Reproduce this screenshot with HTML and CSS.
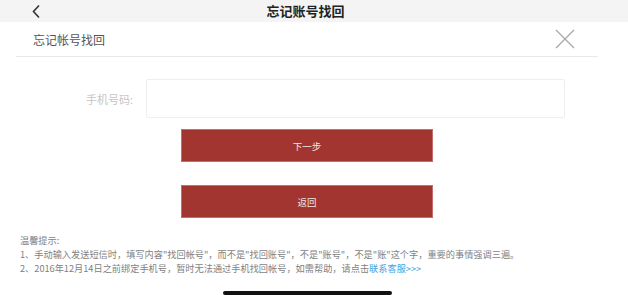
FILE: index.html
```html
<!DOCTYPE html>
<html>
<head>
    <title>忘记账号找回</title>
    <link rel="stylesheet" href="styles.css">
</head>
<body>
    <!-- Top navigation bar -->
    <div class="top-bar">
        <a class="back" href="#">
            <svg width="10" height="15" viewBox="0 0 10 15">
                <path d="M8 1.5 L2.5 7.5 L8 13.5" fill="none" stroke="#333" stroke-width="1.6"/>
            </svg>
        </a>
        <h1>忘记账号找回</h1>
        <span></span>
    </div>

    <!-- Panel header -->
    <div class="panel-head">
        <span class="panel-title">忘记帐号找回</span>
        <svg class="close" width="20" height="20" viewBox="0 0 20 20">
            <path d="M1 1 L19 19 M19 1 L1 19" stroke="#a8a8a8" stroke-width="1.3"/>
        </svg>
    </div>

    <!-- Main form -->
    <form class="find-form">
        <div class="form-row">
            <label for="phone">手机号码:</label>
            <input type="text" id="phone" name="phone">
        </div>
        <button type="button" class="btn btn-next">下一步</button>
        <button type="button" class="btn btn-back">返回</button>
    </form>

    <!-- Tips -->
    <div class="tips">
        <p>温馨提示:</p>
        <p>1、手动输入发送短信时，填写内容"找回帐号"，而不是"找回账号"，不是"账号"，不是"账"这个字，重要的事情强调三遍。</p>
        <p>2、2016年12月14日之前绑定手机号，暂时无法通过手机找回帐号，如需帮助，请点击<a href="#">联系客服&gt;&gt;&gt;</a></p>
    </div>

    <div class="home-bar"></div>
</body>
</html>
```

FILE: styles.css
```css
body {
    margin: 0;
    padding: 0;
    background: #fff;
    font-family: "Noto Sans CJK SC", "Noto Sans", sans-serif;
    color: #333;
}

/* Top bar */
.top-bar {
    height: 22px;
    background: #f4f4f4;
    display: grid;
    grid-template-columns: 1fr auto 1fr;
    align-items: center;
}

.back {
    display: flex;
    padding-left: 31px;
}

h1 {
    margin: 0 17px 0 0;
    font-size: 13px;
    line-height: 22px;
    font-weight: bold;
    color: #222;
}

/* Panel header */
.panel-head {
    height: 34px;
    margin: 0 30px 0 16px;
    border-bottom: 1px solid #e8e8e8;
    display: flex;
    justify-content: space-between;
    align-items: center;
}

.panel-title {
    padding-left: 17px;
    font-size: 12px;
    color: #555;
}

.close {
    margin-right: 23px;
}

/* Form */
.find-form {
    margin: 0;
    display: flex;
    flex-direction: column;
    align-items: flex-start;
}

.form-row {
    margin-top: 22px;
    display: grid;
    grid-template-columns: 133px 419px;
    column-gap: 13px;
    align-items: center;
}

.form-row label {
    text-align: right;
    font-size: 11px;
    color: #c6c6c6;
}

.form-row input {
    box-sizing: border-box;
    height: 39px;
    border: 1px solid #eeeeee;
    border-radius: 2px;
    padding: 0 10px;
    outline: none;
}

.btn {
    margin-left: 181px;
    width: 252px;
    height: 33px;
    border: 1px solid #c46e69;
    background: #a2352f;
    color: #f3e4e3;
    font-family: inherit;
    font-size: 9.5px;
    padding: 0;
    cursor: pointer;
}

.btn-next {
    margin-top: 11px;
}

.btn-back {
    margin-top: 23px;
}

/* Tips */
.tips {
    margin-top: 15px;
    padding-left: 20px;
    font-size: 9.2px;
    line-height: 14px;
    color: #7f7f7f;
    white-space: nowrap;
}

.tips p {
    margin: 0;
}

.tips a {
    color: #45a3dc;
    text-decoration: none;
}

.home-bar {
    margin: 16px 0 0 223px;
    width: 169px;
    height: 4px;
    border-radius: 2px;
    background: #111;
}
```
